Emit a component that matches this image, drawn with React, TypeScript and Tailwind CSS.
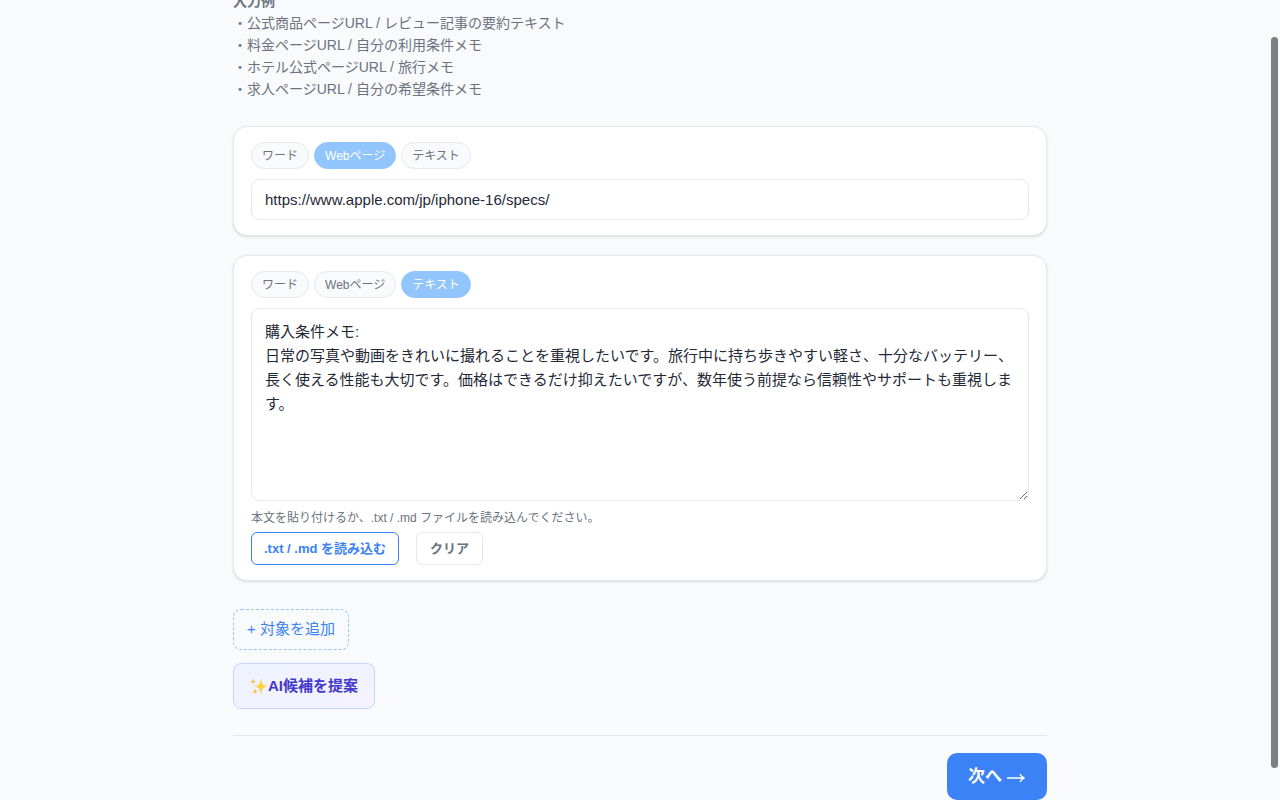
import { useState } from "react";
import clsx from "clsx";

type SourceType = "word" | "web" | "text";

const sourceTypes: { id: SourceType; label: string }[] = [
  { id: "word", label: "ワード" },
  { id: "web", label: "Webページ" },
  { id: "text", label: "テキスト" },
];

const examples = [
  "・公式商品ページURL / レビュー記事の要約テキスト",
  "・料金ページURL / 自分の利用条件メモ",
  "・ホテル公式ページURL / 旅行メモ",
  "・求人ページURL / 自分の希望条件メモ",
];

const defaultMemo =
  "購入条件メモ:\n日常の写真や動画をきれいに撮れることを重視したいです。旅行中に持ち歩きやすい軽さ、十分なバッテリー、長く使える性能も大切です。価格はできるだけ抑えたいですが、数年使う前提なら信頼性やサポートも重視します。";

function SourceTabs({ value, onChange }: { value: SourceType; onChange: (v: SourceType) => void }) {
  return (
    <div className="mb-2.5 flex gap-[5px]">
      {sourceTypes.map((t) => (
        <button
          key={t.id}
          type="button"
          aria-pressed={t.id === value}
          onClick={() => onChange(t.id)}
          className={clsx(
            "h-[27px] rounded-full border px-2.5 text-xs whitespace-nowrap",
            t.id === value
              ? "border-[#93c5fd] bg-[#93c5fd] text-white"
              : "border-[#e5e7eb] bg-[#f9fafb] text-[#6b7280]"
          )}
        >
          {t.label}
        </button>
      ))}
    </div>
  );
}

function Sparkles() {
  return (
    <svg viewBox="0 0 18 18" className="h-[18px] w-[18px] shrink-0" aria-hidden="true">
      <path d="M11 2C11.800 7 13 8.400 17.500 9.300C13 10.200 11.800 12 11 17C10.200 12 9 10.200 4.500 9.300C9 8.400 10.200 7 11 2Z" fill="#fdd13f" stroke="#f9d98a" strokeWidth="0.600" />
      <path d="M3 1C3.400 3.300 3.900 4 6 4.400C3.900 4.800 3.400 5.500 3 7.800C2.600 5.500 2.100 4.800 0.300 4.400C2.100 4 2.600 3.300 3 1Z" fill="#f8c25a" />
      <path d="M5 11.500C5.500 13.500 6 14 8 14.400C6 14.800 5.500 15.400 5 17.500C4.500 15.400 4 14.800 2.200 14.400C4 14 4.500 13.500 5 11.500Z" fill="#f8c25a" />
    </svg>
  );
}

export default function App() {
  const [first, setFirst] = useState<SourceType>("web");
  const [second, setSecond] = useState<SourceType>("text");
  const [url, setUrl] = useState("https://www.apple.com/jp/iphone-16/specs/");
  const [memo, setMemo] = useState(defaultMemo);

  return (
    <div
      lang="ja"
      className="h-screen overflow-hidden bg-[#f9fafb] font-['Liberation_Sans','Noto_Sans_CJK_JP',sans-serif] text-[#1f2937]"
    >
      <main className="mx-auto -mt-2.5 w-full max-w-[814px]">
        <section className="text-sm leading-[22px] text-[#6b7280]">
          <h2 className="font-bold">入力例</h2>
          <ul>
            {examples.map((text) => (
              <li key={text}>{text}</li>
            ))}
          </ul>
        </section>

        <section className="mt-[26px] rounded-[14px] border border-[#e5e7eb] bg-white px-[17px] py-[15px] shadow-sm">
          <SourceTabs value={first} onChange={setFirst} />
          <input
            type="url"
            aria-label="WebページのURL"
            value={url}
            onChange={(e) => setUrl(e.target.value)}
            className="block h-[41px] w-full rounded-lg border border-[#e5e7eb] bg-white px-[13px] text-[15px]"
          />
        </section>

        <section className="mt-[19px] rounded-[14px] border border-[#e5e7eb] bg-white px-[17px] py-[15px] shadow-sm">
          <SourceTabs value={second} onChange={setSecond} />
          <textarea
            aria-label="テキスト"
            value={memo}
            onChange={(e) => setMemo(e.target.value)}
            className="block h-[193px] w-full resize-y rounded-lg border border-[#e5e7eb] bg-white py-[11px] pr-3 pl-[13px] text-[15px] leading-6"
          />
          <p className="mt-[7px] mb-1 text-xs leading-5 text-[#6b7280]">
            本文を貼り付けるか、.txt / .md ファイルを読み込んでください。
          </p>
          <div className="flex gap-[17px] text-[13px] font-bold">
            <button type="button" className="h-[33px] rounded-md border border-[#3b82f6] bg-white px-3 text-[#3b82f6]">
              .txt / .md を読み込む
            </button>
            <button
              type="button"
              onClick={() => setMemo("")}
              className="h-[33px] rounded-md border border-[#e5e7eb] bg-white px-[13px] text-[#6b7280]"
            >
              クリア
            </button>
          </div>
        </section>

        <div className="mt-7 flex flex-col items-start gap-[13px] text-[15px]">
          <button type="button" className="h-[41px] rounded-lg border border-dashed border-[#93c5fd] px-[13px] text-[#3b82f6]">
            + 対象を追加
          </button>
          <button
            type="button"
            className="flex h-[46px] items-center rounded-lg border border-[#c7d2fe] bg-linear-to-br from-[#eef2ff] to-[#f5f3ff] px-4 font-bold text-[#4338ca]"
          >
            <Sparkles />
            AI候補を提案
          </button>
        </div>

        <footer className="mt-[26px] flex justify-end border-t border-[#e5e7eb] pt-[17px]">
          <button
            type="button"
            className="flex h-[47px] items-center gap-1 rounded-[10px] bg-[#3b82f6] px-[21px] text-[17px] font-bold text-white"
          >
            次へ
            <svg viewBox="0 0 20 12" className="h-3 w-5" fill="none" stroke="currentColor" strokeWidth="1.400" aria-hidden="true">
              <path d="M1 7H18M14 3C15 5.200 16.300 6.500 18.500 7C16.300 7.500 15 8.800 14 11" />
            </svg>
          </button>
        </footer>
      </main>

      {/* scroll thumb */}
      <div aria-hidden="true" className="fixed top-[37px] right-0.5 bottom-8 w-[7px] rounded-full bg-[#7d7e7f]" />
    </div>
  );
}
